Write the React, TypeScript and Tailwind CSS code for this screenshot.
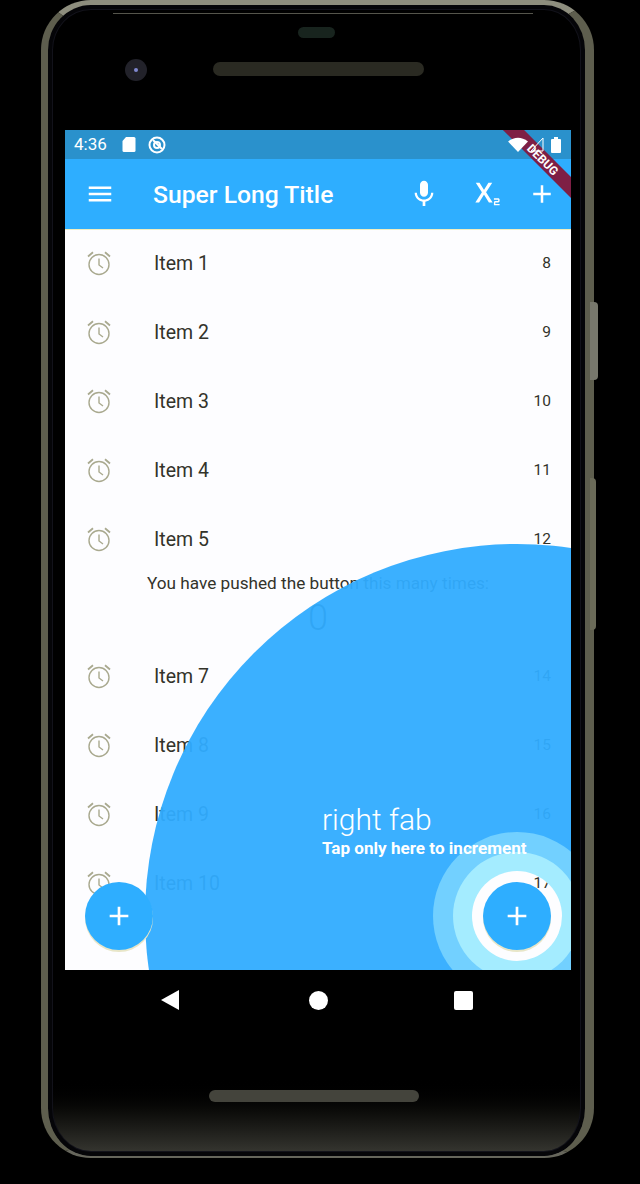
import { MdAdd, MdMenu, MdMic, MdSubscript } from 'react-icons/md'

const rows = [
  { label: 'Item 1', num: 8 },
  { label: 'Item 2', num: 9 },
  { label: 'Item 3', num: 10 },
  { label: 'Item 4', num: 11 },
  { label: 'Item 5', num: 12 },
]

const rowsAfter = [
  { label: 'Item 7', num: 14 },
  { label: 'Item 8', num: 15 },
  { label: 'Item 9', num: 16 },
  { label: 'Item 10', num: 17 },
]

function AlarmIcon() {
  return (
    <svg width="26" height="26" viewBox="0 0 26 26" fill="none" stroke="#a9a98f" strokeWidth="1.4">
      <circle cx="13" cy="13.500" r="10" />
      <path d="M13 7.500v6.500l4 3" />
      <path d="M2 5.500L7 1.300M24 5.500L19 1.300" strokeWidth="1.800" />
    </svg>
  )
}

function Row({ label, num, raised }: { label: string; num: number; raised?: boolean }) {
  return (
    <div className="flex h-[69px] items-center pl-[21px] pr-[20px]">
      <AlarmIcon />
      <span className="ml-[42px] flex-1 text-[19.5px] text-[#33332a]">{label}</span>
      {/* the number under the hole only shows inside the white ring */}
      <span className={raised ? 'relative z-20 text-[15.5px] text-[#33332a] [clip-path:circle(45px_at_-16px_45px)]' : 'text-[15.5px] text-[#33332a]'}>{num}</span>
    </div>
  )
}

function Fab({ className }: { className: string }) {
  return (
    <div className={`absolute bottom-[20px] z-30 flex h-[68px] w-[68px] items-center justify-center rounded-full bg-[#2eaeff] shadow-[0_2px_0_#e8e6c8] ${className}`}>
      <MdAdd size={32} className="text-white" />
    </div>
  )
}

export default function App() {
  return (
    <div className="h-[1184px] w-[640px] overflow-hidden bg-black pl-[41px] font-['Roboto',sans-serif]">
      <div className="relative h-[1158px] w-[553px] rounded-[50px] border-x-[7px] border-r-[9px] border-t-[5px] border-b-[2px] border-x-[#5e5e4e] border-t-[#8e8e7e] border-b-[#66665c] bg-gradient-to-b from-black from-[93%] to-[#3a3a34] pl-[17px] pt-[125px] shadow-[inset_0_0_0_4px_#050508,inset_0_0_0_5px_#12121a]">
        {/* side buttons */}
        <div className="absolute left-[542px] top-[297px] h-[78px] w-[8px] rounded-r bg-[#77776c]" />
        <div className="absolute left-[542px] top-[473px] h-[152px] w-[6px] rounded-r bg-[#6a6a58]" />

        {/* top highlight, earpiece, camera, speaker */}
        <div className="absolute left-[65px] top-[8px] h-[1px] w-[420px] bg-[#55554c]" />
        <div className="absolute left-[250px] top-[22px] h-[11px] w-[37px] rounded-full bg-[#18241e]" />
        <div className="absolute left-[77px] top-[54px] flex h-[22px] w-[22px] items-center justify-center rounded-full bg-[#22222a]">
          <div className="h-[4px] w-[4px] rounded-full bg-[#8088d0]" />
        </div>
        <div className="absolute left-[165px] top-[57px] h-[14px] w-[211px] rounded-full bg-[#2a2a22]" />

        {/* screen */}
        <div className="relative h-[840px] w-[506px] overflow-hidden bg-[#fdfdff]">
          <div className="flex h-[29px] items-center bg-[#2a91cc] pl-[9px] pr-[10px] text-white">
            <span className="text-[17px]">4:36</span>
            <svg width="14" height="15" viewBox="0 0 14 15" className="ml-[15px]" fill="white">
              <path d="M4 0h8a1.500 1.500 0 0 1 1.500 1.500v12A1.500 1.500 0 0 1 12 15H2a1.500 1.500 0 0 1-1.500-1.500V4z" />
            </svg>
            <svg width="18" height="18" viewBox="0 0 18 18" className="ml-[12px]" fill="none" stroke="white" strokeWidth="2">
              <circle cx="9" cy="9" r="7.500" />
              <circle cx="9" cy="9" r="3" />
              <path d="M5 4l9 9" />
            </svg>
            <div className="flex-1" />
            {/* status icons sit above the ribbon */}
            <div className="relative z-50 flex items-center">
              <svg width="20" height="15" viewBox="0 0 20 15" fill="white">
                <path d="M0 4.500Q10 -3 20 4.500L10 15z" />
              </svg>
              <svg width="14" height="15" viewBox="0 0 14 15" className="ml-[2px]" fill="none" stroke="white" strokeWidth="1">
                <path d="M13 1v13H1z" />
              </svg>
              <svg width="10" height="16" viewBox="0 0 10 16" className="ml-[7px]" fill="white">
                <path d="M3 0h4v2h2a1 1 0 0 1 1 1v12a1 1 0 0 1-1 1H1a1 1 0 0 1-1-1V3a1 1 0 0 1 1-1h2z" />
              </svg>
            </div>
          </div>
          <div className="flex h-[70px] items-center bg-[#2eaeff] pl-[20px] pr-[14px] text-white shadow-[0_1px_0_#f0eec0]">
            <MdMenu size={30} />
            <span className="ml-[38px] flex-1 pt-[1px] text-[24.7px] font-medium">Super Long Title</span>
            <MdMic size={32} />
            <MdSubscript size={34} className="ml-[27px]" />
            <MdAdd size={30} className="ml-[26px]" />
          </div>

          <div>
            {rows.map((r) => (
              <Row key={r.label} label={r.label} num={r.num} />
            ))}
            <div className="flex h-[68px] flex-col items-center">
              <span className="text-[17.2px] leading-[18px] text-[#33332a]">You have pushed the button this many times:</span>
              <span className="mt-[6px] text-[36px] leading-[40px] font-light text-[#33332a]">0</span>
            </div>
            {rowsAfter.map((r) => (
              <Row key={r.label} label={r.label} num={r.num} raised={r.num === 17} />
            ))}
          </div>

          {/* tutorial overlay, centred on the right fab */}
          <div className="absolute left-[80px] top-[414px] z-10 h-[744px] w-[744px] rounded-full bg-[#30acff]/95" />
          <div className="absolute left-[368px] top-[702px] z-10 h-[168px] w-[168px] rounded-full bg-[#72d0ff]" />
          <div className="absolute left-[388px] top-[722px] z-10 h-[128px] w-[128px] rounded-full bg-[#a4ecff]" />
          <div className="absolute left-[407px] top-[741px] z-10 h-[90px] w-[90px] rounded-full bg-[#fdfdff]" />

          <div className="absolute left-[257px] top-[673px] z-20 text-white">
            <div className="text-[30px] leading-[34px] font-light">right fab</div>
            <div className="text-[17.100px] leading-[22px] font-bold">Tap only here to increment</div>
          </div>

          <Fab className="left-[20px]" />
          <Fab className="left-[418px]" />

          {/* debug ribbon */}
          <div className="absolute left-[423px] top-[22px] z-40 flex h-[15px] w-[110px] rotate-45 items-center justify-center bg-[#7e1f45] text-[12px] leading-none font-bold text-white">
            DEBUG
          </div>
        </div>

        {/* nav bar */}
        <div className="flex h-[60px] w-[506px] items-center">
          <svg width="20" height="20" viewBox="0 0 20 20" fill="white" className="ml-[96px]">
            <path d="M18 0v20L0 10z" />
          </svg>
          <div className="ml-[128px] h-[19px] w-[19px] rounded-full bg-white" />
          <div className="ml-[126px] h-[19px] w-[19px] rounded-[2px] bg-white" />
        </div>

        <div className="absolute left-[161px] top-[1085px] h-[12px] w-[210px] rounded-full bg-[#44443c]" />
      </div>
    </div>
  )
}
